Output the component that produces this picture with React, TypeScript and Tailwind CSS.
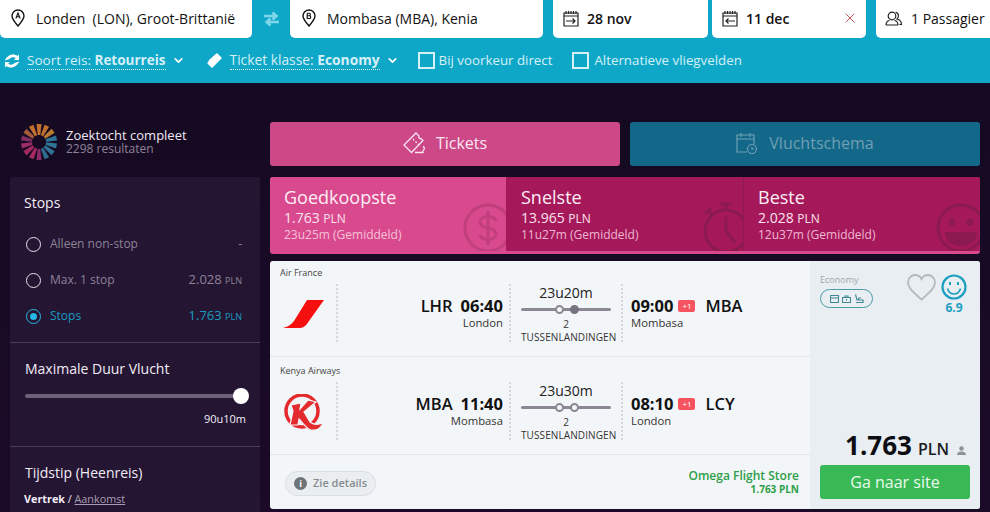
import { ChevronDown, X } from "lucide-react";

const font = { fontFamily: '"Open Sans", sans-serif' };

function Pin({ letter }: { letter: string }) {
  return (
    <svg width="14" height="18" viewBox="0 0 14 18" fill="none" stroke="#111" strokeWidth="1.4">
      <path d="M7 1C3.600 1 1 3.500 1 6.800 1 10.500 5 14.600 7 17c2-2.400 6-6.500 6-10.200C13 3.500 10.400 1 7 1z" />
      {letter === "A" ? (
        <path d="M4.800 9.500 7 4l2.200 5.500M5.600 7.800h2.800" strokeWidth="1.100" />
      ) : (
        <path d="M5.200 4.200v5.300h2.300c1.700 0 1.700-2.700 0-2.700H5.200m0 0h2c1.500 0 1.500-2.600 0-2.600h-2" strokeWidth="1.100" />
      )}
    </svg>
  );
}

function DateIcon({ back }: { back?: boolean }) {
  return (
    <svg width="16" height="17" viewBox="0 0 16 17" fill="none" stroke="#222" strokeWidth="1.200">
      <path d="M1 3h14v13H1zM1 6h14M3 1v3M5.500 1v3M8 1v3M10.500 1v3M13 1v3" />
      {back ? <path d="M13 11H4m2.500-2.500L4 11l2.500 2.500" /> : <path d="M3 11h9m-2.500-2.500L12 11l-2.500 2.500" />}
    </svg>
  );
}

function Spinner() {
  const colors = ["#c0702c", "#c0702c", "#b87a30", "#2f7396", "#2f7396", "#2f7396", "#2f6c90", "#8c2a68", "#a52a62", "#a52a62", "#9a2c6a", "#7d2f62", "#a35a38", "#c0702c"];
  return (
    <svg width="36" height="36" viewBox="0 0 36 36">
      {colors.map((c, i) => (
        <path
          key={i}
          d="M15.500 0h5l-1.200 11h-2.600z"
          fill={c}
          transform={`rotate(${(i * 360) / colors.length} 18 18)`}
        />
      ))}
    </svg>
  );
}

function Radio({ label, price, on }: { label: string; price: string; on?: boolean }) {
  const tone = on ? "text-[#1a9cc0]" : "text-[#8d8296]";
  return (
    <div className={`flex items-center h-9 ml-[2px] mr-[4px] text-[12px] ${tone}`}>
      <span
        className={`w-[15px] h-[15px] rounded-full border flex items-center justify-center mr-[9px] ${
          on ? "border-[#27b7e0]" : "border-[#e6e1ea]"
        }`}
      >
        {on && <span className="w-[7px] h-[7px] rounded-full bg-[#27b7e0]" />}
      </span>
      <span className="flex-1">{label}</span>
      {price === "-" ? (
        <span>-</span>
      ) : (
        <span className="text-[13px]">
          {price} <span className="text-[9px]">PLN</span>
        </span>
      )}
    </div>
  );
}

function Route({ faded }: { faded?: boolean }) {
  return (
    <div className="relative w-[90px] h-[3px] bg-[#8b8794] rounded-full mt-[7px] mb-[8px]">
      <span className="absolute left-[34px] -top-[3px] w-[9px] h-[9px] rounded-full border-2 border-[#8b8794] bg-[#f3f6f8]" />
      <span
        className={`absolute left-[49px] -top-[3px] w-[9px] h-[9px] rounded-full border-2 ${
          faded ? "border-[#8b8794] bg-[#f3f6f8]" : "border-[#77737f] bg-[#77737f]"
        }`}
      />
    </div>
  );
}

function Leg(props: {
  airline: string;
  logo: React.ReactNode;
  from: string;
  fromCity: string;
  dep: string;
  dur: string;
  arr: string;
  to: string;
  toCity: string;
  faded?: boolean;
  second?: boolean;
}) {
  return (
    <div className={`border-b border-[#dfe5e9] ${props.second ? "h-[98px] pt-[8px]" : "h-[96px] pt-[6px]"}`}>
      <div className="pl-[10px] text-[9px] leading-[12px] text-[#444]">{props.airline}</div>
      <div className="flex h-[58px] mt-[5px]">
        <div className="w-[68px] pt-[2px] flex items-center justify-center border-r-2 border-dotted border-[#d3d8dc]">
          {props.logo}
        </div>
        <div className="w-[173px] pr-[6px] pt-[12px] flex flex-col items-end border-r-2 border-dotted border-[#d3d8dc]">
          <div className="text-[16.500px] leading-[20px] font-semibold text-[#111] flex gap-[8px]">
            <span>{props.from}</span>
            <span className="font-bold">{props.dep}</span>
          </div>
          <div className="text-[11.300px] leading-[14px] text-[#333]">{props.fromCity}</div>
        </div>
        <div className="w-[110px] pl-[10px]">
          <div className="w-[90px] flex flex-col items-center">
            <div className="text-[14px] leading-[17px] text-[#222]">{props.dur}</div>
            <Route faded={props.faded} />
            <div className="text-[10px] leading-[12px] -mt-[1px] text-[#333]">2</div>
            <div className="self-start whitespace-nowrap text-[10px] leading-[14px] tracking-[0.1px] text-[#333]">
              TUSSENLANDINGEN
            </div>
          </div>
        </div>
        <div className="pl-[8px] pt-[12px] border-l-2 border-dotted border-[#d3d8dc]">
          <div className="flex items-center text-[16.500px] leading-[20px] font-semibold text-[#111]">
            <span className="font-bold">{props.arr}</span>
            <span className="ml-[5px] w-[17px] h-[12px] rounded-[2px] bg-[#f4535f] text-white text-[8px] leading-[12px] text-center font-normal">
              +1
            </span>
            <span className="ml-[10px]">{props.to}</span>
          </div>
          <div className="text-[11.300px] leading-[14px] text-[#333]">{props.toCity}</div>
        </div>
      </div>
    </div>
  );
}

export default function App() {
  return (
    <div style={font} className="w-[990px] h-[512px] overflow-hidden bg-[#1b0a26] flex flex-col">
      {/* zoekbalk */}
      <div className="h-[83px] shrink-0 bg-[#0fa7c7]">
        <div className="h-[38px] flex text-[14px] text-[#111]">
          <div className="w-[252px] bg-white rounded-b-[5px] flex items-center pl-[11px] pb-[2px]">
            <Pin letter="A" />
            <span className="ml-[11px] whitespace-pre">Londen  (LON), Groot-Brittanië</span>
          </div>
          <div className="w-[38px] flex items-center justify-center">
            <svg width="17" height="16" viewBox="0 0 17 16" fill="none" stroke="#7fd6ea" strokeWidth="2.500">
              <path d="M1 5h12M9.500 1.500 13.500 5l-4 3.500M16 11H4M7.500 7.500 3.500 11l4 3.500" />
            </svg>
          </div>
          <div className="w-[253px] bg-white rounded-b-[5px] flex items-center pl-[12px] pb-[2px]">
            <Pin letter="B" />
            <span className="ml-[11px]">Mombasa (MBA), Kenia</span>
          </div>
          <div className="w-[155px] ml-[10px] bg-white rounded-b-[5px] flex items-center pl-[10px] pb-[2px]">
            <DateIcon />
            <span className="ml-[8px] font-semibold">28 nov</span>
          </div>
          <div className="w-[154px] ml-[4px] bg-white rounded-b-[5px] flex items-center pl-[10px] pb-[2px]">
            <DateIcon back />
            <span className="ml-[8px] font-semibold">11 dec</span>
            <X className="ml-auto mr-[8px] text-[#b5403f]" size={16} strokeWidth={1.300} />
          </div>
          <div className="w-[114px] ml-[10px] bg-white rounded-bl-[5px] flex items-center pl-[9px] pb-[2px] whitespace-nowrap">
            <svg width="18" height="15" viewBox="0 0 18 15" fill="none" stroke="#222" strokeWidth="1.200">
              <circle cx="7" cy="5" r="3.800" />
              <path d="M1 14c0-3 2-4.200 3.500-4.500M13 14c0-3-2-4.200-3.500-4.500M1 14h12M10.500 1.300c3 0 4.200 4.800 1.500 6.700 2 .5 4.500 2 4.500 5.500h-2" />
            </svg>
            <span className="ml-[8px]">1 Passagier</span>
          </div>
        </div>
        <div className="h-[45px] flex items-center text-[13.500px] text-[#d5f0f7] pl-[4px]">
          <svg width="16" height="16" viewBox="0 0 16 16" fill="#fff">
            <path d="M4 3.500C7 0.800 11 1 13.500 3L15 1.500V7h-5l1.800-1.800C9.800 3.800 7 4.200 5.500 6L1 7.500c.3-1.500 1.500-3 3-4zM12 12.500C9 15.200 5 15 2.500 13L1 14.500V9h5L4.200 10.800c2 1.400 4.800 1 6.300-.8l4.500-1.500c-.3 1.500-1.500 3-3 4z" />
          </svg>
          <span className="ml-[7px] border-b border-dotted border-[#d5f0f7] leading-[18px]">
            Soort reis: <span className="font-bold">Retourreis</span>
          </span>
          <ChevronDown className="ml-[6px] text-white" size={13} strokeWidth={3} />
          <svg className="ml-[21px]" width="17" height="17" viewBox="0 0 17 17" fill="#fff">
            <path d="M11 1l5 5-10 10-5-5c1.200-.6 2-1.400 1.700-2.700L11 1z" />
          </svg>
          <span className="ml-[7px] text-[13.800px] border-b border-dotted border-[#d5f0f7] leading-[18px]">
            Ticket klasse: <span className="font-bold">Economy</span>
          </span>
          <ChevronDown className="ml-[6px] text-white" size={13} strokeWidth={3} />
          <span className="ml-[19px] w-[17px] h-[17px] border-[2px] border-[#d5f0f7]" />
          <span className="ml-[4px] text-[13.300px]">Bij voorkeur direct</span>
          <span className="ml-[20px] w-[17px] h-[17px] border-[2px] border-[#d5f0f7]" />
          <span className="ml-[5px] text-[13.300px]">Alternatieve vliegvelden</span>
        </div>
      </div>

      <div className="flex-1 flex bg-gradient-to-b from-[#150a22] to-[#1c0a28] px-[10px] gap-[10px]">
        {/* filters */}
        <div className="w-[250px] shrink-0">
          <div className="h-[94px] flex items-center pl-[11px] pt-[24px]">
            <Spinner />
            <div className="ml-[9px]">
              <div className="text-[13px] leading-[14px] text-[#efe9f2]">Zoektocht compleet</div>
              <div className="text-[12px] leading-[14px] text-[#8d8296]">2298 resultaten</div>
            </div>
          </div>
          <div className="bg-[#241533] rounded-t-[3px] text-[#f2edf5]">
            <div className="h-[166px] px-[14px] pt-[16px] pb-[10px] border-b border-[#4a3d57]">
              <div className="text-[14px] leading-[20px] mb-[13px]">Stops</div>
              <Radio label="Alleen non-stop" price="-" />
              <Radio label="Max. 1 stop" price="2.028" />
              <Radio label="Stops" price="1.763" on />
            </div>
            <div className="h-[104px] px-[14px] pt-[16px] border-b border-[#4a3d57]">
              <div className="text-[14px] leading-[20px] ml-[1px]">Maximale Duur Vlucht</div>
              <div className="relative h-[4px] ml-[1px] bg-[#6d6078] rounded-full mt-[15px]">
                <span className="absolute -right-[3px] -top-[6px] w-[16px] h-[16px] rounded-full bg-white" />
              </div>
              <div className="text-[11px] text-right mt-[14px] leading-[14px]">90u10m</div>
            </div>
            <div className="px-[14px] pt-[16px] h-[100px]">
              <div className="text-[14px] leading-[20px] ml-[1px]">Tijdstip (Heenreis)</div>
              <div className="text-[10.800px] mt-[8px] leading-[16px]">
                <span className="font-bold">Vertrek</span> / <span className="underline text-[#a79cb0]">Aankomst</span>
              </div>
            </div>
          </div>
        </div>

        {/* resultaten */}
        <div className="w-[710px]">
          <div className="flex gap-[10px] pt-[39px]">
            <div className="w-[350px] h-[44px] pb-[2px] rounded-[3px] bg-[#cc4887] flex items-center justify-center text-[16px] text-[#fbe7f1]">
              <svg width="22" height="22" viewBox="0 0 22 22" fill="none" stroke="#fbe7f1" strokeWidth="1.300">
                <path d="M13 1l3 3c-.8 1.500.6 3 2 2.500l2 2-11.500 12L1 13 13 1z" />
                <path d="M10 7l1.200 1.200M12.500 9.500l1.200 1.200M15 12l1.200 1.200M12 20.500h8c-.4-2 .2-3 1.500-3.500l-1-3" />
              </svg>
              <span className="ml-[11px]">Tickets</span>
            </div>
            <div className="w-[350px] h-[44px] pb-[2px] rounded-[3px] bg-[#13688a] flex items-center justify-center text-[16px] text-[#6f9fb3]">
              <svg width="22" height="22" viewBox="0 0 22 22" fill="none" stroke="#6f9fb3" strokeWidth="1.200">
                <path d="M11 20H1V3h17v9M1 7h17M5 1v4M14 1v4" />
                <circle cx="16" cy="17" r="4.500" />
                <path d="M16 15v2h2" />
              </svg>
              <span className="ml-[11px]">Vluchtschema</span>
            </div>
          </div>

          <div className="mt-[11px] h-[77px] rounded-[3px] overflow-hidden bg-[#d84a8d] flex relative">
            <div className="w-[236px] h-[74px] bg-[#d84a8d] pl-[14px] pt-[8px] relative overflow-hidden">
              <div className="text-[18px] leading-[24px] text-[#fdeef5]">Goedkoopste</div>
              <div className="text-[14px] leading-[17px] text-[#fbe2ee]">
                1.763 <span className="text-[12px]">PLN</span>
              </div>
              <div className="text-[12px] leading-[16px] text-[#f7c1da]">23u25m (Gemiddeld)</div>
              <svg className="absolute left-[193px] top-[26px]" width="50" height="50" viewBox="0 0 50 50" fill="none" stroke="#c23f7d" strokeWidth="3">
                <circle cx="25" cy="25" r="23" />
                <path d="M33 18c-1-3-4-4.500-8-4.500-4.500 0-8 2-8 5.500s3 5 8 6c5 1 8 2.500 8 6s-3.500 5.500-8 5.500c-4 0-7-1.500-8-4.500M25 8v34" />
              </svg>
            </div>
            <div className="w-[237px] h-[74px] bg-[#a5195a] pl-[15px] pt-[8px] relative overflow-hidden">
              <div className="text-[18px] leading-[24px] text-[#fdeef5]">Snelste</div>
              <div className="text-[14px] leading-[17px] text-[#fbe2ee]">
                13.965 <span className="text-[12px]">PLN</span>
              </div>
              <div className="text-[12px] leading-[16px] text-[#efb7d2]">11u27m (Gemiddeld)</div>
              <svg className="absolute left-[196px] top-[24px]" width="46" height="52" viewBox="0 0 46 52" fill="none" stroke="#8a1a50" strokeWidth="3">
                <circle cx="24" cy="30" r="21" />
                <path d="M18 3h12M24 3v6M6 9l4 4M3 13l6-6M24 16v14l9 12" />
              </svg>
            </div>
            <div className="w-[237px] h-[74px] bg-[#a5195a] border-l border-[#8e1a50] pl-[14px] pt-[8px] relative overflow-hidden">
              <div className="text-[18px] leading-[24px] text-[#fdeef5]">Beste</div>
              <div className="text-[14px] leading-[17px] font-medium text-[#fbe2ee]">
                2.028 <span className="text-[12px]">PLN</span>
              </div>
              <div className="text-[12px] leading-[16px] text-[#efb7d2]">12u37m (Gemiddeld)</div>
              <svg className="absolute left-[192px] top-[26px]" width="50" height="50" viewBox="0 0 50 50" fill="none" stroke="#8a1a50" strokeWidth="3">
                <circle cx="25" cy="25" r="23" />
                <circle cx="16" cy="19" r="3.500" fill="#8a1a50" stroke="none" />
                <circle cx="34" cy="19" r="3.500" fill="#8a1a50" stroke="none" />
                <path d="M9 29h32c0 9-7 14-16 14S9 38 9 29z" fill="#8a1a50" stroke="none" />
              </svg>
            </div>
          </div>

          {/* ticket */}
          <div className="mt-[7px] h-[248px] rounded-[3px] bg-[#f3f6f8] flex overflow-hidden">
            <div className="w-[540px]">
              <Leg
                airline="Air France"
                logo={
                  <svg width="41" height="28" viewBox="0 0 41 28">
                    <path d="M24 0H41L26 21c-2.500 4-5 7-9 7H0c4-1 8-3 11-7L24 0z" fill="#f60f0f" />
                  </svg>
                }
                from="LHR"
                dep="06:40"
                fromCity="London"
                dur="23u20m"
                arr="09:00"
                to="MBA"
                toCity="Mombasa"
              />
              <Leg
                second
                airline="Kenya Airways"
                logo={
                  <svg width="41" height="37" viewBox="0 0 41 37" fill="none">
                    <circle cx="19" cy="17" r="16" stroke="#e32a2e" strokeWidth="3.500" />
                    <path d="M8 11l10-2-1 6 8-9 8 2-12 10 6 10c3 3 7 3 13 1-2 5-6 8-12 7-5-1-8-7-12-11l-1 6H7l3-14-2-6z" fill="#e32a2e" stroke="#f3f6f8" strokeWidth="1.200" />
                  </svg>
                }
                from="MBA"
                dep="11:40"
                fromCity="Mombasa"
                dur="23u30m"
                arr="08:10"
                to="LCY"
                toCity="London"
                faded
              />
              <div className="flex items-center justify-between pl-[15px] pr-[11px] h-[54px] pt-[2px]">
                <div className="w-[91px] h-[25px] rounded-full border border-[#d8dfe4] bg-[#eaeef1] flex items-center pl-[8px] text-[11px] font-semibold text-[#858b90]">
                  <span className="w-[13px] h-[13px] rounded-full bg-[#6e7478] text-white text-[9px] leading-[13px] text-center font-bold mr-[6px]">
                    i
                  </span>
                  Zie details
                </div>
                <div className="text-right -mt-[4px]">
                  <div className="text-[12px] leading-[16px] font-semibold text-[#2d9e48]">Omega Flight Store</div>
                  <div className="text-[10px] leading-[11px] font-bold text-[#2d9e48]">1.763 PLN</div>
                </div>
              </div>
            </div>
            <div className="w-[170px] bg-[#e8eef2] px-[10px] pt-[12px] pb-[10px] flex flex-col">
              <div className="flex justify-between">
                <div>
                  <div className="text-[9px] leading-[13px] text-[#a1a7ab]">Economy</div>
                  <div className="mt-[3px] w-[53px] h-[19px] rounded-full border border-[#4b9aa5] flex items-center justify-center gap-[3px]">
                    <svg width="9" height="8" viewBox="0 0 9 8" fill="none" stroke="#3f8894" strokeWidth="1.100"><path d="M.5.500h8v7h-8zM.5 3h8" /></svg>
                    <svg width="9" height="8" viewBox="0 0 9 8" fill="none" stroke="#3f8894" strokeWidth="1.100"><path d="M.5 2.500h8v5h-8zM3 2.500V1h3v1.500M4.500 4v1.500" /></svg>
                    <svg width="10" height="10" viewBox="0 0 10 10" fill="none" stroke="#3f8894" strokeWidth="1.100"><path d="M1.500 .500L3 6h6v2.500H2M4 6l1-2h2" /></svg>
                  </div>
                </div>
                <div className="flex gap-[5px] mt-[1px] pr-[3px]">
                  <svg width="29" height="27" viewBox="0 0 29 27" fill="none" stroke="#b4b8bb" strokeWidth="1.800">
                    <path d="M14.500 25.500C8 19.500 1 14.500 1 8.500 1 4 4.500 1 8 1c3 0 5.300 1.500 6.500 4C15.700 2.500 18 1 21 1c3.500 0 7 3 7 7.500 0 6-7 11-13.500 17z" />
                  </svg>
                  <div className="flex flex-col items-center">
                    <svg width="26" height="26" viewBox="0 0 26 26" fill="none" stroke="#1d9fc0" strokeWidth="2.200">
                      <circle cx="13" cy="13" r="11.500" />
                      <path d="M6.500 14.500c1 4 3.500 5.500 6.500 5.500s5.500-1.500 6.500-5.500" strokeWidth="1.600" />
                      <path d="M9 8v3M17 8v3" strokeWidth="2" />
                    </svg>
                    <div className="text-[12px] leading-[14px] font-bold text-[#1d9fc0] mt-[1px]">6.9</div>
                  </div>
                </div>
              </div>
              <div className="mt-auto flex items-baseline justify-end pr-[4px]">
                <span className="text-[26px] leading-[30px] font-bold text-[#0d0d14]">1.763</span>
                <span className="text-[16px] ml-[6px] text-[#1b1b22] font-semibold">PLN</span>
                <svg className="ml-[8px]" width="9" height="9" viewBox="0 0 9 9" fill="#8d9296">
                  <circle cx="4.500" cy="2.500" r="2.200" />
                  <path d="M0 9c0-2.500 2-3.500 4.500-3.500S9 6.500 9 9z" />
                </svg>
              </div>
              <div className="mt-[4px] h-[34px] rounded-[3px] bg-[#39b955] text-[#eafaee] text-[16px] flex items-center justify-center">
                Ga naar site
              </div>
            </div>
          </div>
        </div>
      </div>
    </div>
  );
}
